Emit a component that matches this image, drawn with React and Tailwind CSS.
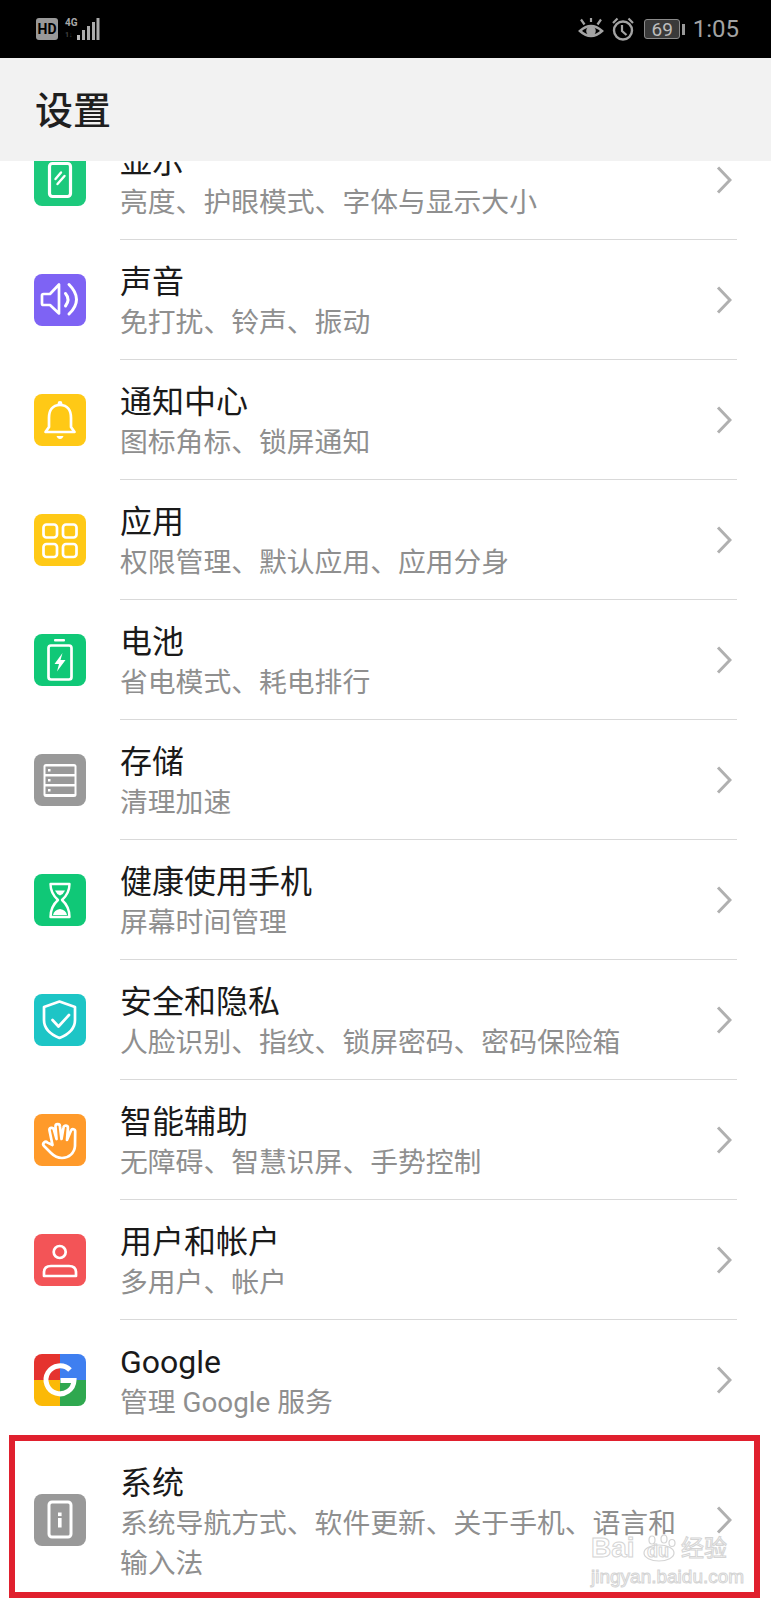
const S = { fill: "none", stroke: "#fff", strokeWidth: 2.7, strokeLinecap: "round", strokeLinejoin: "round" };

function Tile({ color, children }) {
  return (
    <svg width="52" height="52" viewBox="0 0 52 52" className="block shrink-0">
      <rect width="52" height="52" rx="8" fill={color} />
      {children}
    </svg>
  );
}

const icons = {
  display: (
    <Tile color="#1cc97c">
      <rect x="15.5" y="9.5" width="21" height="33" rx="3" {...S} strokeWidth="3.2" />
      <path d="M21.5 25 L27 18.5 M23.5 30 L30.5 22" {...S} strokeWidth="2.4" />
    </Tile>
  ),
  sound: (
    <Tile color="#7e63f4">
      <path d="M8 21.5 Q8 20 9.5 20 H16 L25 10.5 V39.5 L16 31 H9.5 Q8 31 8 29.5 Z" {...S} />
      <path d="M31.5 19.5 Q36.5 25.5 31.5 32" {...S} strokeWidth="3" />
      <path d="M35 10.5 Q50 25.5 35 40" {...S} strokeWidth="3" />
    </Tile>
  ),
  bell: (
    <Tile color="#ffc916">
      <circle cx="26" cy="9.5" r="2.4" fill="#fff" />
      <path d="M26 11 C18 11 15 17 15 24 V33 L11.5 38 H40.5 L37 33 V24 C37 17 34 11 26 11 Z" {...S} />
      <path d="M22.5 42 H29.5 Q28.5 45 26 45 Q23.5 45 22.5 42 Z" fill="#fff" />
    </Tile>
  ),
  apps: (
    <Tile color="#ffc916">
      <rect x="9.5" y="10.5" width="13.5" height="13" rx="3" {...S} />
      <rect x="29" y="10.5" width="13.5" height="13" rx="3" {...S} />
      <rect x="9.5" y="30" width="13.5" height="13" rx="3" {...S} />
      <rect x="29" y="30" width="13.5" height="13" rx="3" {...S} />
    </Tile>
  ),
  battery: (
    <Tile color="#10c877">
      <rect x="20" y="5" width="11" height="2.4" rx="1" fill="#fff" />
      <rect x="14.5" y="11.5" width="23" height="34" rx="2.5" {...S} />
      <path d="M28.5 19 L20.5 30 H25 L23 37.5 L31.5 26 H26.5 L28.5 19 Z" fill="#fff" />
    </Tile>
  ),
  storage: (
    <Tile color="#999999">
      <rect x="9.5" y="10" width="33" height="33" rx="2.5" fill="#fff" />
      <rect x="11.5" y="12.5" width="29" height="7.5" fill="#999" />
      <rect x="11.5" y="22.5" width="29" height="7.5" fill="#999" />
      <rect x="11.5" y="32.5" width="29" height="7.5" fill="#999" />
      <rect x="14" y="15" width="2.5" height="2.5" fill="#fff" />
      <rect x="14" y="25" width="2.5" height="2.5" fill="#fff" />
      <rect x="14" y="35" width="2.5" height="2.5" fill="#fff" />
    </Tile>
  ),
  hourglass: (
    <Tile color="#10c877">
      <path d="M16.5 10 H35.5 C35.5 18 32.5 22 28 26 C32.5 30 35.5 36 35.5 43 H16.5 C16.5 36 19.5 30 24 26 C19.5 22 16.5 18 16.5 10 Z" {...S} strokeWidth="2.4" />
      <path d="M21 16.5 H31 Q29.5 20 26 21.5 Q22.5 20 21 16.5 Z" fill="#fff" />
      <path d="M19 41 Q20 36 26 35 Q32 36 33 41 Z" fill="#fff" />
    </Tile>
  ),
  shield: (
    <Tile color="#1dc5c6">
      <path d="M25.5 7.5 L41 13 V26 C41 35 33 41 25.5 44 C18 41 10 35 10 26 V13 Z" {...S} />
      <path d="M18.5 26 L24.5 32.5 L35 21" {...S} />
    </Tile>
  ),
  hand: (
    <Tile color="#ff9a2a">
      <path d="M18.5 31 L15.5 16.5 a2.2 2.2 0 0 1 4.3 -1 L22.5 25 L21.5 12.5 a2.2 2.2 0 0 1 4.4 -.3 L27.5 25 L29.5 13.5 a2.2 2.2 0 0 1 4.4 .6 L33 26 L37 16.5 a2.2 2.2 0 0 1 4.2 1 L41 32 C40.5 39 35 44 28 44 C23 44 20 42 17 39 L10 32 a2.4 2.4 0 0 1 3.5 -3.4 L18.5 31 Z" {...S} />
    </Tile>
  ),
  user: (
    <Tile color="#f35457">
      <circle cx="25.7" cy="18" r="6" {...S} />
      <path d="M10 42 V38.5 Q10 32 17 32 H35 Q42 32 42 38.5 V42 Z" {...S} />
    </Tile>
  ),
  google: (
    <svg width="52" height="52" viewBox="0 0 52 52" className="block shrink-0">
      <clipPath id="gc"><rect width="52" height="52" rx="8" /></clipPath>
      <g clipPath="url(#gc)">
        <rect width="26" height="26" fill="#e5332f" />
        <rect x="26" width="26" height="26" fill="#3f7ff0" />
        <rect y="26" width="26" height="26" fill="#fbb907" />
        <rect x="26" y="26" width="26" height="26" fill="#2fa84f" />
      </g>
      <path d="M36 16 A14 14 0 1 0 40 26.5 H26.5" fill="none" stroke="#fff" strokeWidth="5" />
    </svg>
  ),
  system: (
    <Tile color="#999999">
      <rect x="15" y="8" width="22" height="35" rx="3" {...S} strokeWidth="3" />
      <rect x="24" y="18.5" width="3.6" height="3.6" fill="#fff" />
      <rect x="24" y="24" width="3.6" height="9.5" fill="#fff" />
    </Tile>
  ),
};

const rows = [
  ["display", "显示", ["亮度、护眼模式、字体与显示大小"]],
  ["sound", "声音", ["免打扰、铃声、振动"]],
  ["bell", "通知中心", ["图标角标、锁屏通知"]],
  ["apps", "应用", ["权限管理、默认应用、应用分身"]],
  ["battery", "电池", ["省电模式、耗电排行"]],
  ["storage", "存储", ["清理加速"]],
  ["hourglass", "健康使用手机", ["屏幕时间管理"]],
  ["shield", "安全和隐私", ["人脸识别、指纹、锁屏密码、密码保险箱"]],
  ["hand", "智能辅助", ["无障碍、智慧识屏、手势控制"]],
  ["user", "用户和帐户", ["多用户、帐户"]],
  ["google", "Google", ["管理 Google 服务"]],
  ["system", "系统", ["系统导航方式、软件更新、关于手机、语言和输入法"]],
];

function Chevron() {
  return (
    <svg width="16" height="28" viewBox="0 0 16 28" className="block shrink-0 ml-auto mr-[5px]">
      <path d="M2 1.5 L14 14 L2 26.5" fill="none" stroke="#b0b0b0" strokeWidth="3" />
    </svg>
  );
}

function Row({ icon, title, sub, last }) {
  return (
    <div className={last ? "flex h-[160px]" : "flex h-[120px]"}>
      <div className="w-[120px] shrink-0 pl-[34px] flex items-center">{icons[icon]}</div>
      <div className={last ? "flex flex-1 items-center mr-[34px]" : "flex flex-1 items-center mr-[34px] border-b border-[#d9d9d9]"}>
        <div className="w-[570px] pt-[6px]">
          <div className="text-[32px] leading-[40px] text-[#1a1a1a]">{title}</div>
          <div className="mt-[1px] text-[27.8px] leading-[40px] text-[#8f8f8f]">{sub}</div>
        </div>
        <Chevron />
      </div>
    </div>
  );
}

function StatusBar() {
  return (
    <div className="h-[58px] shrink-0 bg-black flex items-center pl-[36px] pr-[32px] text-[#a3a3a3]">
      <div className="w-[22px] h-[22px] rounded-[3px] bg-[#999] text-black text-[14px] font-bold leading-[22px] text-center font-['Roboto',sans-serif]">HD</div>
      <div className="ml-[7px] w-[11px] h-[22px] flex flex-col justify-between">
        <div className="text-[10px] leading-[10px] font-bold text-[#a8a8a8] font-['Roboto',sans-serif]">4G</div>
        <div className="text-[7px] leading-[9px] font-bold text-[#444] font-['Roboto',sans-serif]">1↓</div>
      </div>
      <svg width="26" height="24" viewBox="0 0 26 24" className="block">
        <rect x="1" y="18" width="3" height="5" fill="#bbb" />
        <rect x="6" y="13" width="3" height="10" fill="#aaa" />
        <rect x="11" y="9" width="3" height="14" fill="#aaa" />
        <rect x="16" y="5" width="3" height="18" fill="#aaa" />
        <rect x="20.5" y="1" width="3" height="22" fill="#aaa" />
      </svg>
      <div className="flex-1" />
      <svg width="26" height="22" viewBox="0 0 26 22" className="block">
        <path d="M2 13 Q13 3 24 13 Q13 23 2 13 Z" fill="none" stroke="#a3a3a3" strokeWidth="2.6" />
        <circle cx="13" cy="13" r="4.8" fill="#a3a3a3" />
        <path d="M3 1.5 L6.5 6.5 M23 1.5 L19.5 6.5 M13 0 V4" stroke="#a3a3a3" strokeWidth="2.2" />
      </svg>
      <svg width="24" height="24" viewBox="0 0 24 24" className="block ml-[7px]">
        <circle cx="12" cy="13.5" r="9" fill="none" stroke="#a3a3a3" strokeWidth="2.4" />
        <path d="M11 8 V14 L15.5 18" fill="none" stroke="#a3a3a3" strokeWidth="2.2" />
        <path d="M2 6 L6.5 1.5 M22 6 L17.5 1.5" stroke="#a3a3a3" strokeWidth="2.2" />
      </svg>
      <div className="ml-[9px] w-[36px] h-[20px] rounded-[3px] border border-[#8a8a8a] bg-[#3a3a3a] flex items-center justify-center text-[19px] leading-none text-[#bdbdbd] font-['Roboto',sans-serif]">69</div>
      <div className="ml-[2px] w-[2.5px] h-[11px] bg-[#999]" />
      <div className="ml-[8px] text-[24px] leading-none font-['Roboto',sans-serif]">1:05</div>
    </div>
  );
}

function Watermark() {
  const stroke = "text-transparent [-webkit-text-stroke:1px_#d4d4d4] font-['Liberation_Sans','Noto_Sans_CJK_SC',sans-serif]";
  return (
    <div className="absolute left-[591px] top-[1534px] w-[140px] h-[50px]">
      <div className="flex items-center h-[28px]">
        <span className={"text-[28px] leading-none font-bold w-[47px] " + stroke}>Bai</span>
        <span className="relative w-[42px] h-[28px] block">
          <svg width="42" height="28" viewBox="0 0 42 28" className="block">
            <g fill="none" stroke="#d4d4d4" strokeWidth="1.2">
              <ellipse cx="21" cy="19" rx="15" ry="8" />
              <ellipse cx="14" cy="6" rx="3" ry="4" />
              <ellipse cx="26" cy="5" rx="3" ry="4" />
              <ellipse cx="34" cy="9" rx="3" ry="3.5" />
            </g>
          </svg>
          <span className={"absolute left-[9px] top-[8px] text-[18px] leading-none font-bold " + stroke}>du</span>
        </span>
        <span className={"text-[23px] leading-none ml-[1px] " + stroke}>经验</span>
      </div>
      <div className={"mt-[5px] text-[19px] leading-[20px] whitespace-nowrap " + stroke}>jingyan.baidu.com</div>
    </div>
  );
}

export default function App() {
  return (
    <div className="relative w-[771px] h-[1600px] bg-white overflow-hidden flex flex-col font-['Roboto','Noto_Sans_CJK_SC',sans-serif]">
      <StatusBar />
      <div className="h-[103px] shrink-0 bg-[#f2f2f2] flex items-center pl-[35px] pt-[4px] text-[38px] font-medium text-[#1f1f1f]">设置</div>
      <div className="flex-1 overflow-hidden">
        <div className="-mt-[41px]">
          {rows.map(([icon, title, sub], i) => (
            <Row key={icon} icon={icon} title={title} sub={sub} last={i === rows.length - 1} />
          ))}
        </div>
      </div>
      <div className="absolute left-[9px] top-[1435px] w-[751px] h-[163px] border-[6px] border-[#e0202e]" />
      <Watermark />
    </div>
  );
}
